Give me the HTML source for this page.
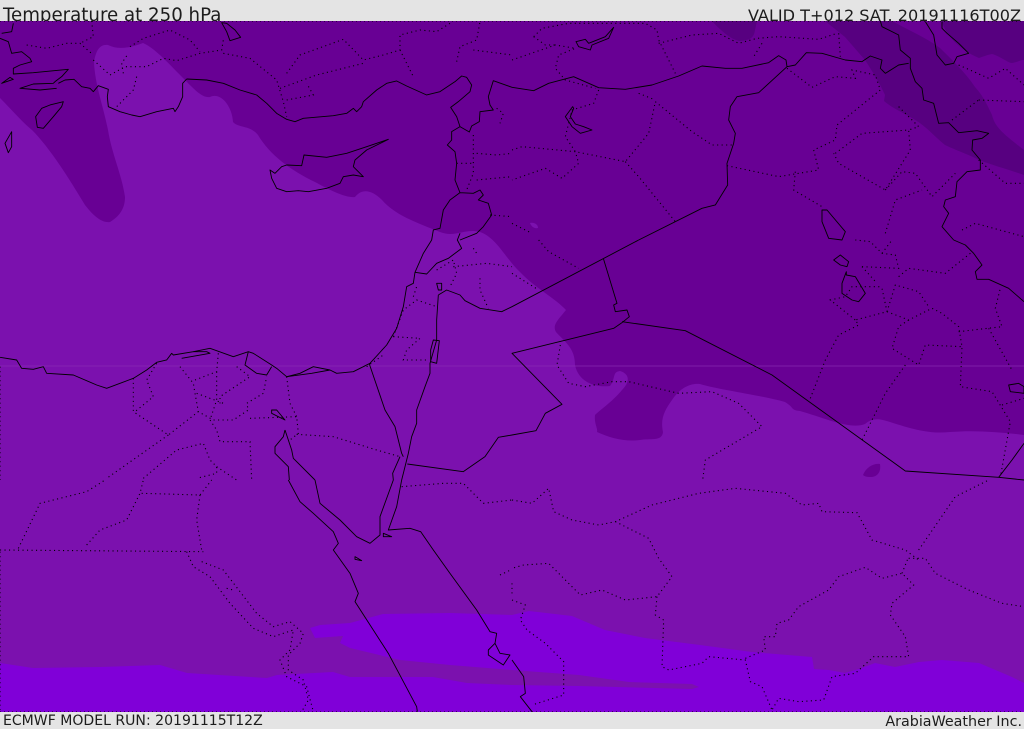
<!DOCTYPE html>
<html><head><meta charset="utf-8"><style>
html,body{margin:0;padding:0;background:#e4e4e4}
#p{position:relative;width:1024px;height:729px;overflow:hidden;background:#e4e4e4;font-family:"DejaVu Sans","Liberation Sans",sans-serif;color:#1c1c1c}
.t{position:absolute;white-space:nowrap;line-height:1}
svg{position:absolute;left:0;top:21px}
.s path{fill:none;stroke:#000;stroke-width:.9;vector-effect:non-scaling-stroke;stroke-linejoin:round}
.d path{fill:none;stroke:#000;stroke-width:1.1;stroke-dasharray:1.1 3.4;vector-effect:non-scaling-stroke}
</style></head><body><div id="p">
<div class="t" style="left:3px;top:7px;font-size:18.2px">Temperature at 250 hPa</div>
<div class="t" style="right:3px;top:8px;font-size:16.1px">VALID T+012 SAT. 20191116T00Z</div>
<div class="t" style="left:3px;top:714px;font-size:14.05px">ECMWF MODEL RUN: 20191115T12Z</div>
<div class="t" style="right:2px;top:715px;font-size:14.3px">ArabiaWeather Inc.</div>
<svg width="1024" height="691" viewBox="0 21 1024 691">
<rect x="0" y="21" width="1024" height="691" fill="#7b11ae"/>
<path fill="#680094" d="M0,98 C12,110 22,122 32,130 C50,148 70,180 85,205 C95,218 103,223 110,222 C120,216 125,208 125,197 C122,175 112,155 108,130 C103,105 95,85 94,62 C96,50 100,44 108,45 C118,50 130,48 143,43 C155,48 170,65 185,80 C195,90 202,98 210,97 C220,92 232,105 233,122 C238,128 250,125 258,135 C270,155 290,170 315,182 C330,190 345,198 355,197 C362,188 372,190 382,200 C395,215 415,222 440,232 C455,238 465,228 480,232 C497,238 505,258 520,272 C535,288 555,298 566,310 C558,320 552,325 556,332 C565,342 575,348 575,365 C578,380 592,388 610,386 C616,378 612,372 620,371 C630,374 630,382 622,390 C612,402 600,410 595,415 C594,424 598,428 597,432 C610,438 625,442 640,440 C650,438 662,442 663,432 C660,418 665,410 672,400 C680,388 690,383 700,384 C720,390 760,395 785,402 C795,408 790,410 800,411 C825,418 850,430 865,424 C872,418 878,418 890,422 C915,430 930,434 950,432 C975,430 1000,432 1024,435 L1024,21 L0,21 Z"/>
<path fill="#570080" d="M825,21 L845,37 L865,60 C875,75 882,88 885,95 L884,101 C892,108 902,112 912,118 C925,125 935,137 945,145 C960,152 970,155 979,160 C995,166 1010,170 1024,175 L1024,150 C1005,135 995,128 992,115 C985,100 982,95 975,87 C965,72 952,60 940,48 C925,37 908,30 892,21 Z"/>
<path fill="#570080" d="M712,21 C722,32 732,40 740,41 C750,40 754,38 755,30 L757,21 Z"/>
<path fill="#570080" d="M942,21 C945,35 960,50 979,58 C985,56 987,55 992,54 C1000,56 1008,63 1012,63 C1018,62 1020,60 1024,60 L1024,21 Z"/>
<path fill="#7b11ae" d="M530,223 C535,222 538,225 538,228 C534,229 531,226 530,223 Z"/>
<path fill="#680094" d="M863,475 C866,467 874,463 880,464 C881,470 879,476 872,477 C868,477 865,477 863,475 Z"/>
<path fill="#8000d8" d="M0,663 L33,668 L100,667 L160,665 L187,673 L267,678 L277,675 L333,672 L350,677 L433,677 L467,683 L512,685 L579,686 L692,689 L699,687 L692,684 L629,682 L579,675 L512,670 L450,665 L400,660 L350,648 L340,643 L343,636 L315,638 L310,628 L320,625 L350,623 L383,614 L450,613 L512,615 L529,611 L572,616 L605,630 L645,638 L700,645 L752,652 L812,657 L814,669 L829,670 L845,673 L862,668 L875,663 L895,667 L919,662 L942,660 L979,663 L1012,677 L1024,683 L1024,712 L0,712 Z"/>
<path d="M0,366H1024" stroke="#8e32b4" stroke-width="1" opacity=".6"/>
<path d="M0,21.5H1024M0,711.5H1024" stroke="#000" stroke-width="1" stroke-dasharray="1 3" opacity=".55"/>

<g class="d" transform="scale(.33333)">
<path d="M280,180 330,225 375,200 440,200 490,175 530,182 600,160 665,150 670,120M80,135 140,145 200,130 240,130 280,165M275,63 280,110 240,130M390,140 430,115 510,90 570,120 600,155M670,160 750,175 830,240 850,305 860,350M860,220 900,165 1030,118 1090,180 1150,165 1200,150 1200,105 1260,90 1310,95 1350,70M1200,150 1240,230M840,265 950,225 1090,190M1370,185 1380,140 1430,120 1440,65M1420,150 1536,165M370,220 365,190 385,160M410,230 400,270 350,320M860,300 940,285 920,250M1420,405 1420,520 1400,570M1430,460 1490,465 1536,460M1370,490 1420,490M1430,540 1536,530M1490,325 1510,340 1500,370M1470,645 1536,650"/>
</g>
<g class="d" transform="translate(512,0) scale(.33333)">
<path d="M0,180 130,135 190,145 140,165 130,205 160,240 250,265M65,110 90,85 170,70 300,70 400,70 435,90 440,120 490,220M65,110 100,135 130,135M440,130 540,105 620,100 680,130 735,115 800,110 920,118 975,100M750,130 725,170M260,270 245,310 180,330 160,410 190,455 340,485 410,400 430,305 540,395 600,435 665,435M0,450 30,440 190,455 200,490 150,535 100,505 0,540M380,280 430,300M340,485 380,530 490,665M645,497 800,530 920,510M850,515 845,570 930,620M825,205 900,262 970,230 1030,235 1020,210 1090,225 1105,270 975,375 970,420 905,450 920,510M970,460 1050,400 1190,390 1195,450 1120,570 980,490 965,460M1160,320 1220,380 1190,390M1120,570 1170,515 1210,520 1260,590 1330,520M1340,195 1430,235 1480,205 1536,255M1400,300 1536,305M1320,360 1400,300M1120,700 1150,600 1230,570M1350,690 1390,670 1536,710M980,100 985,170M1400,480 1480,550 1536,550M0,670 60,700"/>
</g>
<g class="d" transform="translate(0,240) scale(.33333)">
<path d="M400,415 400,515 505,585 595,515M505,585 320,715M470,370 440,420 460,470 405,515M540,380 580,430 585,460 595,515 640,540 700,540 745,510 740,490 790,460 800,410M585,420 650,395 655,340M650,395 650,480 630,540 650,570 660,605 750,605 755,720M590,460 670,490M710,380 750,410 660,470 660,490M750,535 890,530 895,580 870,600M890,583 1000,590 1130,630 1200,650M860,410 870,490 890,530M0,380 0,720M430,715 530,630 610,610 630,660 650,680 650,700 590,715M650,680 710,720M1180,290 1260,295 1220,330 1210,360 1285,360M1180,290 1210,210 1250,180 1310,200M1240,170 1250,140M1310,90 1360,60 1370,100 1350,140M1360,80 1460,70 1536,80M1440,115 1440,150 1465,205M1100,380 1150,345M1420,25 1430,40"/>
</g>
<g class="d" transform="translate(512,240) scale(.33333)">
<path d="M80,0 110,35 200,85M0,100 80,150M145,315 135,375 170,430 220,440 300,425 350,425 500,460 600,455 680,490 750,560 580,660 572,720M895,475 940,360 980,285 1040,255 1030,240 1125,215 1110,145 1100,140 1020,140 1000,170 955,180 1030,240M1125,215 1190,240 1260,205 1290,220 1340,260 1350,320 1345,440 1440,455 1495,545 1465,712M1190,240 1160,260 1140,325 1220,375 1240,315 1350,320M1125,215 1150,135 1220,155 1250,200M1180,375 1120,460 1090,520 1050,600M1050,80 1160,85 1150,45 1110,40 1075,5 1030,0M1050,80 1095,130M1160,110 1190,85 1300,100 1375,40M1340,275 1470,260 1450,205 1465,145M1430,265 1500,390M1470,495 1536,475M1110,40 1140,0"/>
</g>
<g class="d" transform="translate(0,480) scale(.33333)">
<path d="M55,205 120,70 260,35 315,0M260,195 300,150 380,120 420,40 430,0M425,40 600,45 635,0M600,45 590,120 605,210M0,210 610,215M560,215 580,260 630,290 690,370 760,445 820,470 880,450 870,510 840,540 860,590 920,620 940,695M605,245 670,270 770,400 820,440 870,425 910,460 900,490 865,525 865,570 910,600 925,660 905,695M680,325 700,330M0,215 0,690M1205,20 1330,10 1390,10 1450,70 1536,60M1500,285 1536,268M1536,310 1536,350"/>
</g>
<g class="d" transform="translate(512,480) scale(.33333)">
<path d="M0,60 60,70 110,25 125,95 180,120 260,135 310,125 420,75 560,40 670,25 820,40 870,75 920,70 930,95 1035,98 1080,180 1180,210 1220,240M1220,210 1330,50 1430,0M1190,235 1240,235 1270,280 1370,330 1470,370 1536,380M310,125 410,175 440,235 480,290 435,350 340,360 270,330 205,345 130,270 110,250 35,255 0,265M435,350 430,405 455,420 450,560 470,570 570,550 590,530 700,540 715,605 750,620 780,690M700,535 760,510 755,470 790,470 795,430 830,420 860,380 950,330 980,290 1060,262 1110,295 1170,280 1205,315 1140,370 1135,405 1180,470 1190,530 1085,530 1030,580 960,590 935,660 860,665 800,655 780,690M1170,280 1190,230M0,360 40,375 25,420 45,450 100,490 155,545 155,645 60,675"/>
</g>

<g class="s" transform="scale(.33333)">
<path d="M560,237 620,240 670,250 720,270 770,285 800,310 830,340 860,358 885,365 910,355 1000,347 1040,340 1060,325 1070,335 1085,320 1090,305 1130,270 1160,250 1190,243 1220,258 1280,285 1320,275 1365,245 1385,228 1400,232 1415,255 1410,275 1375,305 1352,322 1370,350 1380,380 1408,396 1415,378 1438,365 1440,335 1480,330 1470,315 1465,290 1480,242 1536,262"/>
<path d="M560,237 548,250 548,290 535,320 525,335 520,325 470,335 420,350 395,345 360,335 325,320 322,290 325,268 295,257 280,275 270,265 245,260 222,238 195,240 175,250"/>
<path d="M190,305 150,315 125,325 107,350 112,382 130,385 160,350 185,320Z"/>
<path d="M40,70 35,95 5,100M0,115 25,125 35,160 65,155 90,175 95,185 60,195 40,205 40,222 100,218 205,208 185,230 165,245 160,250 100,252 60,265 120,270 170,265M30,232 5,250 40,238ZM35,395 15,430 25,458 35,440Z"/>
<path d="M810,510 825,520 845,500 860,495 905,497 912,465 980,472 1040,460 1100,440 1165,418 1100,450 1065,480 1060,500 1090,530 1060,525 1030,530 1020,550 980,565 925,575 895,572 860,575 830,565 815,535Z"/>
<path d="M1380,380 1355,395 1355,420 1342,435 1365,455 1370,490 1365,540 1380,578 1420,580 1440,570 1450,585 1435,600 1465,610 1475,645 1450,680 1430,700 1380,720M1380,578 1350,600 1330,630 1320,685 1300,690 1295,720"/>
<path d="M665,68 680,70 705,90 722,112 690,122 680,95Z"/>
</g>
<g class="s" transform="translate(0,240) scale(.33333)">
<path d="M1295,0 1270,40 1245,97 1240,130 1220,140 1210,200 1190,265 1160,315 1110,370 1060,395 1010,400 990,390 940,380 900,400 860,410 830,385 815,375 760,340 745,335 700,350 630,325 580,335 520,345 515,340 500,360 470,367 440,390 400,415 320,445 290,435 220,405 140,400 130,380 100,388 65,385 50,360 0,352"/>
<path d="M1245,97 1280,102 1310,70 1345,55 1385,25 1372,0 1380,-20M1315,165 1340,150 1380,165 1395,182 1440,205 1505,215 1536,200M1315,165 1310,240 1310,300 1290,370 1290,400 1275,440 1250,510 1250,550 1235,590 1225,640 1210,700 1205,720M1108,372 1155,510 1185,560 1205,640 1210,650M1300,300 1318,302 1310,370 1292,365 1292,330ZM1222,672 1390,695 1455,650 1495,592 1536,585"/>
<path d="M855,570 850,590 825,620 825,640 865,680 868,720M855,570 875,630 880,655 945,720M1200,650 1178,700 1180,720M745,335 735,375 770,400 800,405 815,380M860,410 935,400 990,390M545,355 630,340 620,335 580,335M815,510 830,510 855,540 835,530 815,520ZM1310,130 1325,130 1325,150 1315,150Z"/>
</g>
<g class="s" transform="translate(512,0) scale(.33333)">
<path d="M0,262 65,272 110,250 185,230 260,263 340,268 420,255 500,228 570,198 640,205 690,205 770,188 800,167 822,180 825,200 850,195 883,158 930,160 1000,180 1050,185 1075,168 1110,180 1105,205 1120,220 1160,195 1190,190"/>
<path d="M825,200 740,278 675,290 655,320 650,360 670,400 665,430 645,490 647,555 610,615 570,625 380,720"/>
<path d="M1105,63 1110,80 1160,105 1165,150 1195,175 1195,205 1210,245 1230,265 1235,300 1265,310 1280,370 1310,368 1340,398 1395,392 1430,400 1410,415 1382,420 1380,450 1405,480 1405,510 1365,515 1335,545 1330,590 1300,600 1295,620 1310,640 1290,680 1325,720"/>
<path d="M192,125 220,118 230,130 280,110 305,82 290,115 240,135 235,150 200,140ZM182,320 160,350 180,380 205,400 240,390 215,380 190,372 175,350 185,325ZM930,630 945,630 1000,695 990,720 950,715 930,665Z"/>
<path d="M1240,65 1265,105 1275,165 1300,195 1325,190 1335,170 1370,160 1340,130 1305,100 1290,85 1290,65"/>
</g>
<g class="s" transform="translate(512,240) scale(.33333)">
<path d="M380,0 0,200M274,55 315,190 305,195 310,215 345,210 352,230 330,248 305,265 0,340 150,493 100,520 72,572 0,585M330,245 520,272 780,405 1180,693 1460,712 1536,720M1536,610 1500,660 1460,712"/>
<path d="M1003,95 990,130 990,160 1020,180 1040,185 1060,160 1030,110 1003,105ZM985,45 1010,65 1005,80 985,75 965,60ZM1325,0 1360,15 1385,40 1410,75 1390,95 1395,118 1430,118 1490,145 1536,185M1490,435 1520,430 1536,440 1536,460 1495,455Z"/>
</g>
<g class="s" transform="translate(0,480) scale(.33333)">
<path d="M865,0 900,65 940,100 1000,155 1015,190 1000,210 1050,280 1075,340 1065,365 1165,520 1250,680 1252,695M945,0 960,70 1020,120 1070,170 1110,190 1140,165 1140,110 1180,0M1205,0 1190,80 1165,150 1230,145 1262,155 1300,210 1350,280 1430,390 1470,455 1490,460 1485,490 1465,510 1465,525 1510,555 1530,525 1500,520 1485,490M1150,160 1175,170 1150,170ZM1065,230 1085,242 1065,238Z"/>
</g>
<g class="s" transform="translate(512,480) scale(.33333)">
<path d="M0,540 35,590 40,640 25,650 60,695"/>
</g>
</svg>
</div></body></html>
